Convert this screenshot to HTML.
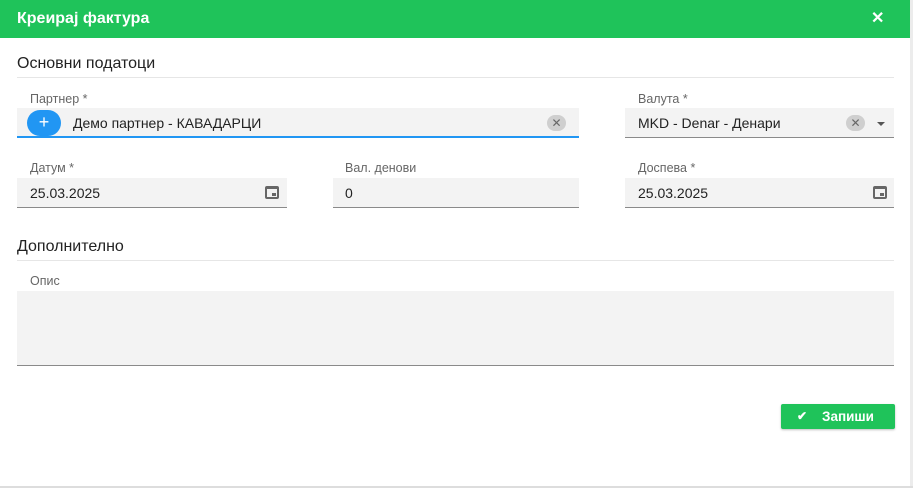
<!DOCTYPE html>
<html><head><meta charset="utf-8"><style>
*{margin:0;padding:0;box-sizing:border-box}
body{width:913px;height:488px;background:#fff;font-family:"Liberation Sans",Arial,sans-serif;position:relative;overflow:hidden;color:#222}
.hdr{position:absolute;left:0;top:0;width:910px;height:38px;background:#1fc35a;color:#fff}
.hdr .t{position:absolute;left:17px;top:10px;font-size:16px;font-weight:bold}
.hdr .x{position:absolute;left:871px;top:11px;font-size:16px;font-weight:bold;line-height:16px}
.edge{position:absolute;left:910px;top:0;width:3px;height:488px;background:#ececec}
.bot{position:absolute;left:0;top:486px;width:913px;height:2px;background:#ddd}
.h{position:absolute;font-size:16px;color:#222}
.hl{position:absolute;height:1px;background:#e6e6e6}
.lbl{position:absolute;font-size:12.5px;color:#666}
.f{position:absolute;background:#f3f3f3;border-bottom:1px solid #8a8a8a;font-size:14px;color:#222}
.f span{position:absolute;top:7px}
.cal{position:absolute;top:8px;width:14px;height:13px;border:2px solid #666;border-top-width:3px;border-radius:2px}
.cal:after{content:"";position:absolute;right:1px;bottom:1px;width:4px;height:3px;background:#666}
.clr{position:absolute;top:7px;width:19px;height:16px;border-radius:8px;background:#cfcfcf;color:#666;font-size:12px;text-align:center;line-height:16px}
.btn{position:absolute;left:781px;top:404px;width:114px;height:25px;background:#1fc35a;border-radius:2px;color:#fff;font-size:13.5px;font-weight:bold;box-shadow:0 1px 2px rgba(0,0,0,.25)}
</style></head><body>
<div class="hdr"><div class="t">Креирај фактура</div><div class="x">✕</div></div>
<div class="edge"></div><div class="bot"></div>
<div class="h" style="left:17px;top:55px">Основни податоци</div>
<div class="hl" style="left:17px;top:77px;width:877px"></div>

<div class="lbl" style="left:30px;top:92px">Партнер *</div>
<div class="f" style="left:17px;top:108px;width:562px;height:30px;border-bottom:2px solid #2196f3">
<div style="position:absolute;left:10px;top:2px;width:34px;height:26px;border-radius:13px;background:#2196f3;color:#fff;text-align:center;font-size:18px;line-height:25px">+</div>
<span style="left:56px">Демо партнер - КАВАДАРЦИ</span>
<div class="clr" style="left:530px">✕</div></div>

<div class="lbl" style="left:638px;top:92px">Валута *</div>
<div class="f" style="left:625px;top:108px;width:269px;height:30px"><span style="left:13px">MKD - Denar - Денари</span>
<div class="clr" style="left:221px">✕</div>
<div style="position:absolute;left:252px;top:14px;border:4px solid transparent;border-top:4px solid #555"></div></div>

<div class="lbl" style="left:30px;top:161px">Датум *</div>
<div class="f" style="left:17px;top:178px;width:270px;height:30px"><span style="left:13px">25.03.2025</span><div class="cal" style="left:248px"></div></div>
<div class="lbl" style="left:345px;top:161px">Вал. денови</div>
<div class="f" style="left:333px;top:178px;width:246px;height:30px"><span style="left:12px">0</span></div>
<div class="lbl" style="left:638px;top:161px">Доспева *</div>
<div class="f" style="left:625px;top:178px;width:269px;height:30px"><span style="left:13px">25.03.2025</span><div class="cal" style="left:248px"></div></div>

<div class="h" style="left:17px;top:238px">Дополнително</div>
<div class="hl" style="left:17px;top:260px;width:877px"></div>
<div class="lbl" style="left:30px;top:274px">Опис</div>
<div class="f" style="left:17px;top:291px;width:877px;height:75px"></div>

<div class="btn"><span style="position:absolute;left:16px;top:5px;font-size:12px">✔</span><span style="position:absolute;left:41px;top:5px">Запиши</span></div>
</body></html>
